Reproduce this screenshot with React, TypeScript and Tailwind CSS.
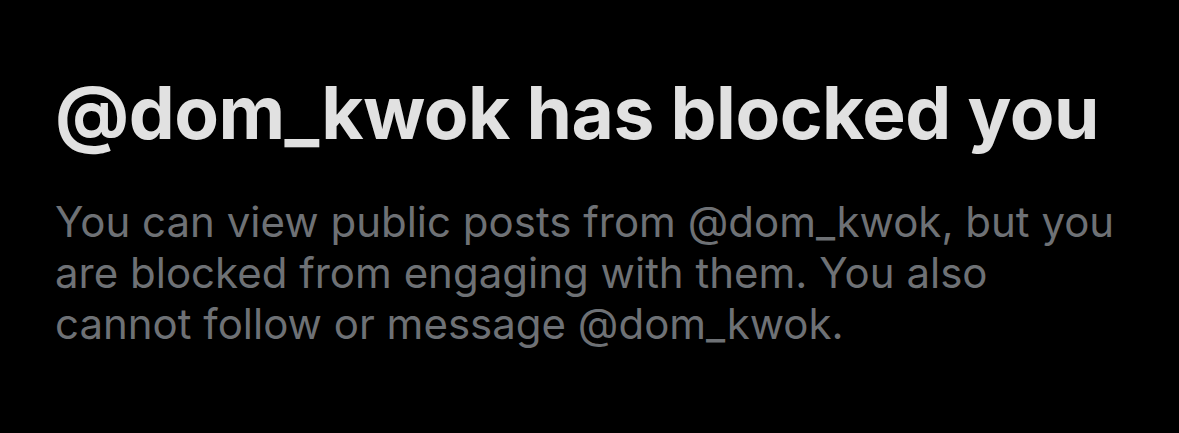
export default function App() {
  return (
    <div className="h-[433px] w-[1179px] bg-black pl-[55px] pt-[68px] font-['Inter',sans-serif]">
      <h1 className="text-[73px] font-bold leading-[90px] tracking-[-0.5px] text-[#e1e1e1]">
        @dom_kwok has blocked you
      </h1>
      <p className="mt-[38px] w-[1065px] text-[42px] leading-[51px] text-[#6e7175]">
        You can view public posts from @dom_kwok, but you are blocked from
        engaging with them. You also cannot follow or message @dom_kwok.
      </p>
    </div>
  );
}
